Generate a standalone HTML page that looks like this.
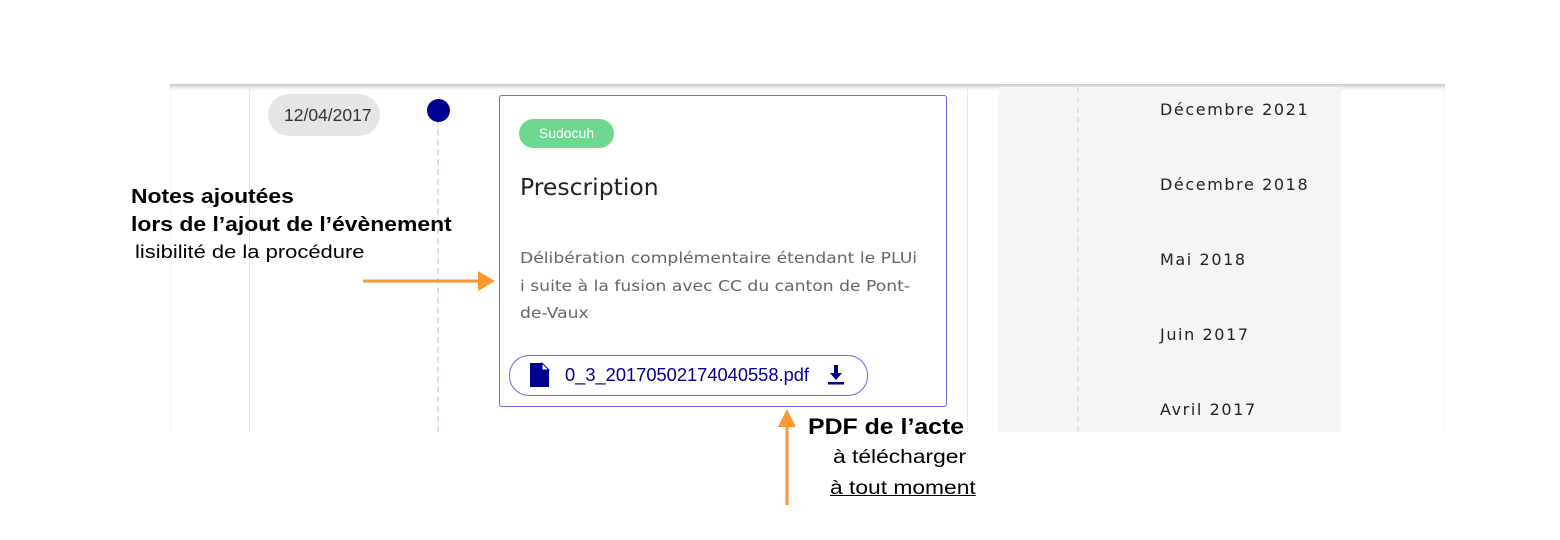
<!DOCTYPE html>
<html><head><meta charset="utf-8"><style>
body{margin:0;width:1560px;height:540px;background:#fff;position:relative;overflow:hidden;font-family:"Liberation Sans",sans-serif}
.a{position:absolute;white-space:nowrap}
.m{font-family:"DejaVu Sans","Liberation Sans",sans-serif}
.sx{transform-origin:0 0}
</style></head><body>
<div class="a" style="left:170px;top:84px;width:1275px;height:348px;background:#fff;box-shadow:inset 0 5px 6px -3px rgba(0,0,0,.28)"></div>
<div class="a" style="left:249px;top:88px;width:1px;height:344px;background:#e6e6e6"></div>
<div class="a" style="left:967px;top:88px;width:1px;height:344px;background:#e6e6e6"></div>
<div class="a" style="left:998px;top:87px;width:343px;height:345px;background:#f5f5f5"></div>
<div class="a" style="left:1077px;top:87px;width:0;height:345px;border-left:2px dashed #e0e0fa"></div>
<div class="a m" style="left:1160px;top:100px;font-size:16px;color:#222;letter-spacing:1.6px;line-height:20px">Décembre 2021</div>
<div class="a m" style="left:1160px;top:175px;font-size:16px;color:#222;letter-spacing:1.6px;line-height:20px">Décembre 2018</div>
<div class="a m" style="left:1160px;top:250px;font-size:16px;color:#222;letter-spacing:1.6px;line-height:20px">Mai 2018</div>
<div class="a m" style="left:1160px;top:325px;font-size:16px;color:#222;letter-spacing:1.6px;line-height:20px">Juin 2017</div>
<div class="a m" style="left:1160px;top:400px;font-size:16px;color:#222;letter-spacing:1.6px;line-height:20px">Avril 2017</div>
<div class="a" style="left:268px;top:94px;width:112px;height:42px;border-radius:21px;background:#e5e5e5"></div>
<div class="a" style="left:284px;top:105px;font-size:17.5px;color:#333;line-height:20px">12/04/2017</div>
<div class="a" style="left:437px;top:100px;width:0;height:332px;border-left:2px dashed #dcdcf8"></div>
<div class="a" style="left:427px;top:99px;width:23px;height:23px;border-radius:50%;background:#000091"></div>
<div class="a" style="left:499px;top:95px;width:446px;height:310px;border:1px solid #6a6ad8;border-radius:3px;background:#fff"></div>
<div class="a" style="left:519px;top:119px;width:95px;height:29px;border-radius:15px;background:#6fd88f;color:#fff;font-size:14px;line-height:29px;text-align:center">Sudocuh</div>
<div class="a m" style="left:520px;top:173px;font-size:23.5px;color:#222">Prescription</div>
<div class="a m sx" style="left:520px;top:245px;font-size:15.5px;line-height:27.5px;color:#666;transform:scaleX(1.108)">Délibération complémentaire étendant le PLUi<br>i suite à la fusion avec CC du canton de Pont-<br>de-Vaux</div>
<div class="a" style="left:509px;top:355px;width:357px;height:39px;border:1px solid #6a6ad8;border-radius:20px"></div>
<svg class="a" style="left:529px;top:362px" width="22" height="26" viewBox="0 0 22 26"><path d="M1 1h12l7 7v17H1z" fill="#000091"/><path d="M13 1l7 7h-7z" fill="#fff" stroke="#000091"/></svg>
<div class="a" style="left:565px;top:364px;font-size:18.3px;color:#000091">0_3_20170502174040558.pdf</div>
<svg class="a" style="left:826px;top:364px" width="20" height="22" viewBox="0 0 20 22"><path d="M8 1h4v8h4l-6 7-6-7h4z" fill="#000091"/><rect x="2" y="18" width="16" height="2.5" fill="#000091"/></svg>
<div class="a sx" style="left:131px;top:183px;font-size:20px;font-weight:bold;line-height:28px;color:#000;transform:scaleX(1.145)">Notes ajoutées<br>lors de l’ajout de l’évènement</div>
<div class="a sx" style="left:135px;top:242px;font-size:18px;color:#000;transform:scaleX(1.22)">lisibilité de la procédure</div>
<svg class="a" style="left:360px;top:266px" width="140" height="30"><path d="M3 15H120" stroke="#fb9a2c" stroke-width="3"/><path d="M118 5l17 10-17 10z" fill="#fb9a2c"/></svg>
<svg class="a" style="left:775px;top:405px" width="24" height="102"><path d="M12 100V20" stroke="#fb9a2c" stroke-width="3"/><path d="M3 22L12 4 21 22z" fill="#fb9a2c"/></svg>
<div class="a sx" style="left:808px;top:414px;font-size:22px;font-weight:bold;color:#000;transform:scaleX(1.13)">PDF de l’acte</div>
<div class="a sx" style="left:833px;top:447px;font-size:19px;color:#000;transform:scaleX(1.2)">à télécharger</div>
<div class="a sx" style="left:830px;top:478px;font-size:19px;color:#000;text-decoration:underline;transform:scaleX(1.2)">à tout moment</div>
</body></html>
